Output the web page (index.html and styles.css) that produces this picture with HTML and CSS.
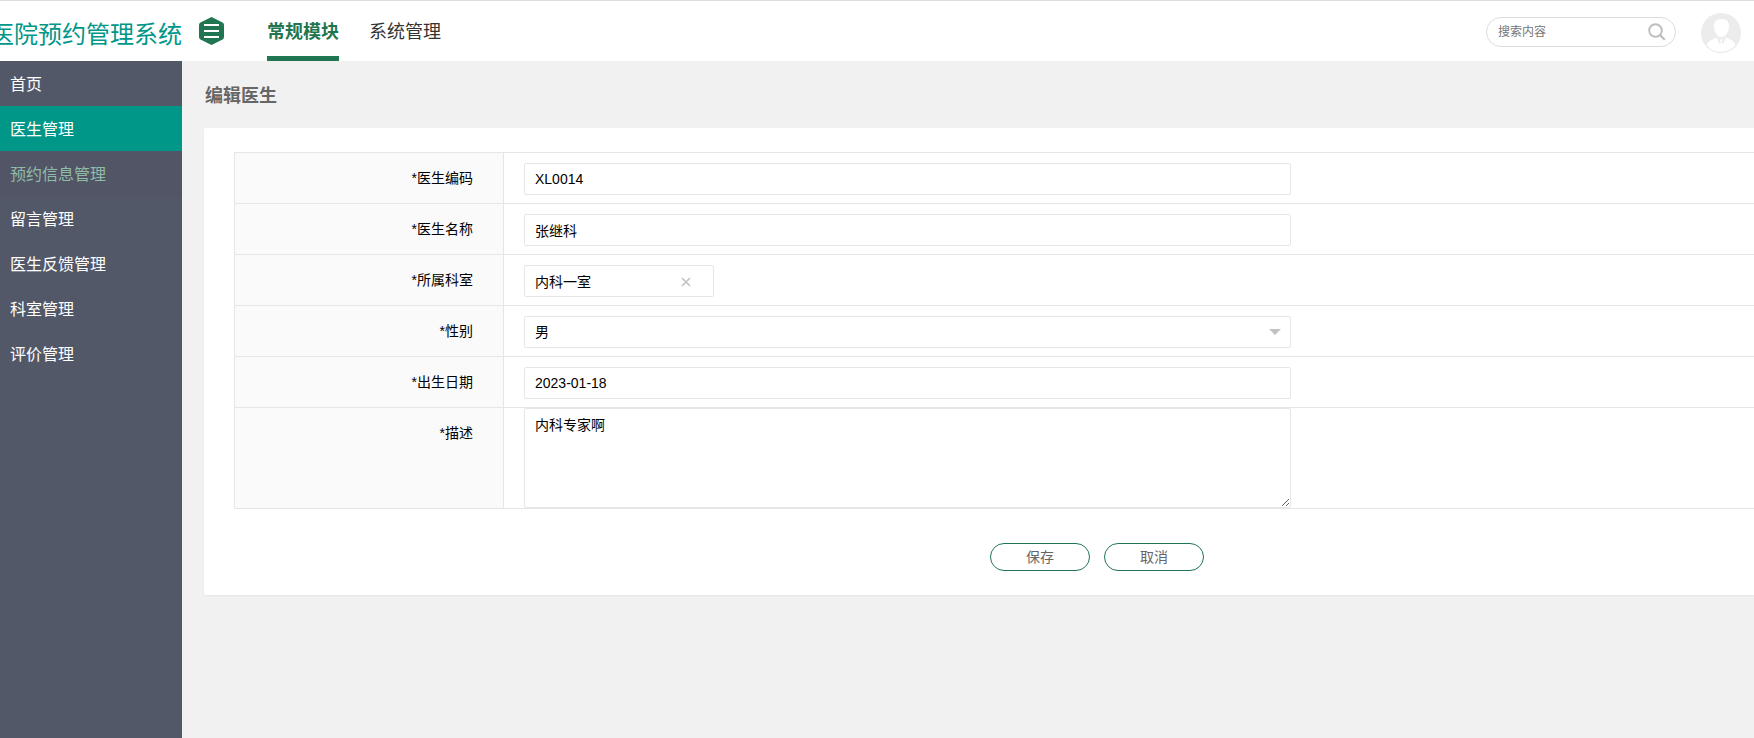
FILE: index.html
```html
<!DOCTYPE html>
<html lang="zh-CN">
<head>
<meta charset="utf-8">
<title>医院预约管理系统</title>
<link rel="stylesheet" href="styles.css">
</head>
<body>
<header class="header">
  <div class="brand"><span class="brand-name">医院预约管理系统</span></div>
  <button class="menu-toggle" type="button" aria-label="菜单">
    <svg width="25" height="28" viewBox="0 0 25 28"><path d="M12.500 0 23.500 5.500Q25 6.300 25 8V20Q25 21.700 23.500 22.500L12.500 28 1.500 22.500Q0 21.700 0 20V8Q0 6.300 1.500 5.500Z" fill="#1f7650"/><path d="M5 8h15M5 14h15M5 20h15" stroke="#fff" stroke-width="2"/></svg>
  </button>
  <nav class="modules">
    <a class="module module-active" href="#">常规模块</a>
    <a class="module" href="#">系统管理</a>
  </nav>
  <form class="search">
    <input class="search-input" type="text" placeholder="搜索内容" aria-label="搜索内容">
    <button class="search-button" type="button" aria-label="搜索">
      <svg width="18" height="18" viewBox="0 0 18 18" fill="none" stroke="#bdbdbd"><circle cx="7.500" cy="7.500" r="6.300" stroke-width="1.900"/><path d="M12 12l4.800 4.800" stroke-width="2.200"/></svg>
    </button>
  </form>
  <a class="avatar" href="#" aria-label="用户">
    <svg width="40" height="40" viewBox="0 0 40 40"><circle cx="20" cy="20" r="20" fill="#ececec"/><path d="M20.500 6c5 0 7.700 2.300 7.500 7.500C27.800 19 24.500 24 20.500 24S13.200 19 13 13.500C12.800 8.300 15.500 6 20.500 6Z" fill="#fff"/><path d="M15.500 24.500 18.500 31 19.500 28 18.500 26.500H22L21 28 22 31 25 24.500C29 26.500 33.500 28 34.500 32 31 36.500 26 38.700 20 38.700S9 36.500 5.500 32C7 28 11.500 26.500 15.500 24.500Z" fill="#fff"/><path d="M18.500 31 19.500 28M22 31 21 28" stroke="#ececec" stroke-width="1"/></svg>
  </a>
</header>
<div class="body">
  <nav class="sidebar">
    <a class="side-link" href="#">首页</a>
    <a class="side-link side-active" href="#">医生管理</a>
    <a class="side-link side-hover" href="#">预约信息管理</a>
    <a class="side-link" href="#">留言管理</a>
    <a class="side-link" href="#">医生反馈管理</a>
    <a class="side-link" href="#">科室管理</a>
    <a class="side-link" href="#">评价管理</a>
  </nav>
  <main class="main">
    <h1 class="title">编辑医生</h1>
    <form class="card">
      <div class="rows">
        <div class="row">
          <label class="label" for="code">*医生编码</label>
          <div class="cell"><input class="field" id="code" type="text" value="XL0014"></div>
        </div>
        <div class="row">
          <label class="label" for="name">*医生名称</label>
          <div class="cell"><input class="field" id="name" type="text" value="张继科"></div>
        </div>
        <div class="row">
          <label class="label" for="dept">*所属科室</label>
          <div class="cell">
            <div class="field combo">
              <input class="combo-input" id="dept" type="text" value="内科一室">
              <button class="clear" type="button" aria-label="清除"><svg width="10" height="10" viewBox="0 0 10 10"><path d="M1 1l8 8M9 1L1 9" stroke="#c2c2c2" stroke-width="1.600"/></svg></button>
            </div>
          </div>
        </div>
        <div class="row">
          <label class="label" for="sex">*性别</label>
          <div class="cell">
            <div class="select-wrap">
              <select class="field" id="sex"><option>男</option><option>女</option></select>
              <svg class="arrow" width="12" height="6" viewBox="0 0 12 6"><path d="M0 0h12L6 6Z" fill="#c2c2c2"/></svg>
            </div>
          </div>
        </div>
        <div class="row">
          <label class="label" for="birth">*出生日期</label>
          <div class="cell"><input class="field" id="birth" type="text" value="2023-01-18"></div>
        </div>
        <div class="row">
          <label class="label" for="desc">*描述</label>
          <div class="cell cell-area"><textarea class="field area" id="desc">内科专家啊</textarea></div>
        </div>
      </div>
      <div class="actions">
        <button class="button" type="button">保存</button>
        <button class="button" type="button">取消</button>
      </div>
    </form>
  </main>
</div>
</body>
</html>
```
FILE: styles.css
```css
* {
  box-sizing: border-box;
}

body {
  margin: 0;
  min-height: 100vh;
  display: flex;
  flex-direction: column;
  background: #f1f1f1;
  color: #000;
  font: 14px/20px "Liberation Sans", "Noto Sans CJK SC", sans-serif;
}

a {
  text-decoration: none;
}

svg {
  display: block;
}

button {
  padding: 0;
  border: 0;
  background: none;
  font: inherit;
}

.header {
  display: flex;
  align-items: center;
  height: 61px;
  padding-right: 13px;
  border-top: 1px solid #ddd;
  background: #fff;
}

.brand {
  display: flex;
  justify-content: flex-end;
  flex: none;
  width: 182px;
  padding-top: 8px;
  overflow: hidden;
  color: #009688;
  font-size: 24px;
  line-height: 36px;
}

.brand-name {
  flex: none;
  white-space: nowrap;
}

.menu-toggle {
  margin: 0 43px 0 17px;
}

.modules {
  display: flex;
  align-self: stretch;
  gap: 30px;
}

.module {
  height: 60px;
  border-bottom: 5px solid transparent;
  color: #333;
  font-size: 18px;
  line-height: 62px;
}

.module-active {
  border-color: #1f7650;
  color: #1f7650;
  font-weight: bold;
}

.search {
  display: flex;
  align-items: center;
  width: 190px;
  height: 30px;
  margin: 2px 25px 0 auto;
  padding: 0 9px 0 11px;
  border: 1px solid #dcdcdc;
  border-radius: 15px;
}

.search-input {
  flex: 1;
  min-width: 0;
  padding: 0;
  border: 0;
  background: none;
  font: inherit;
  font-size: 12px;
}

.search-input::placeholder {
  color: #757575;
}

.avatar {
  margin-top: 4px;
}

.body {
  display: flex;
  flex: 1;
}

.sidebar {
  flex: none;
  width: 182px;
  background: #535868;
}

.side-link {
  display: block;
  padding: 2px 0 0 10px;
  color: #fff;
  font-size: 16px;
  line-height: 43px;
}

.side-active {
  background: #009688;
}

.side-hover {
  background: #525566;
  color: #8fbca5;
}

.main {
  flex: 1;
  min-width: 0;
  padding-left: 22px;
}

.title {
  margin: 0;
  padding: 5px 0 2px 1px;
  color: #666;
  font-size: 18px;
  line-height: 60px;
}

.card {
  padding: 24px 0 24px 30px;
  border-radius: 2px 0 0 2px;
  background: #fff;
  box-shadow: 0 1px 2px rgba(0, 0, 0, 0.05);
}

.rows {
  border: 1px solid #e6e6e6;
  border-right: 0;
}

.row {
  display: flex;
}

.row + .row {
  border-top: 1px solid #e6e6e6;
}

.label {
  flex: none;
  width: 269px;
  padding: 15px 30px 15px 0;
  border-right: 1px solid #e6e6e6;
  background: #fafafa;
  text-align: right;
}

.cell {
  flex: 1;
  padding: 10px 20px 8px;
}

.cell-area {
  padding-top: 0;
  padding-bottom: 0;
}

.field {
  display: block;
  width: 100%;
  max-width: 767px;
  height: 32px;
  margin: 0;
  padding: 0 10px;
  border: 1px solid #e6e6e6;
  border-radius: 2px;
  background: #fff;
  color: #000;
  font: inherit;
  appearance: none;
}

.combo {
  display: flex;
  align-items: center;
  max-width: 190px;
  padding-top: 2px;
  padding-right: 22px;
}

.combo-input {
  flex: 1;
  min-width: 0;
  padding: 0;
  border: 0;
  background: none;
  color: inherit;
  font: inherit;
}

.select-wrap {
  position: relative;
  max-width: 767px;
}

.arrow {
  position: absolute;
  top: 13px;
  right: 10px;
  pointer-events: none;
}

.area {
  height: 100px;
  padding: 6px 10px;
  resize: vertical;
}

.actions {
  display: flex;
  justify-content: center;
  gap: 14px;
  padding: 34px 0 0 206px;
}

.button {
  width: 100px;
  height: 28px;
  border: 1px solid #1f7650;
  border-radius: 14px;
  background: #fff;
  color: #666;
}
```
